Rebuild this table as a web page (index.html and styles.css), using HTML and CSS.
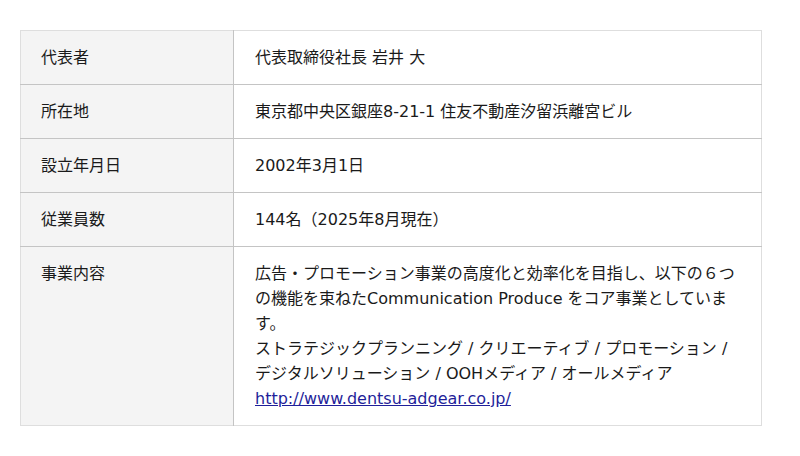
FILE: index.html
```html
<!DOCTYPE html>
<html lang="ja">
<head>
<meta charset="utf-8">
<link rel="stylesheet" href="styles.css">
</head>
<body>
<div class="wrap">
<table class="info">
<tr><th>代表者</th><td>代表取締役社長 岩井 大</td></tr>
<tr><th>所在地</th><td>東京都中央区銀座8-21-1 住友不動産汐留浜離宮ビル</td></tr>
<tr><th>設立年月日</th><td>2002年3月1日</td></tr>
<tr><th>従業員数</th><td>144名（2025年8月現在）</td></tr>
<tr><th>事業内容</th><td>広告・プロモーション事業の高度化と効率化を目指し、以下の６つの機能を束ねたCommunication Produce をコア事業としています。<br>ストラテジックプランニング / クリエーティブ / プロモーション / デジタルソリューション / OOHメディア / オールメディア<br><a href="#">http://www.dentsu-adgear.co.jp/</a></td></tr>
</table>
</div>
</body>
</html>
```
FILE: styles.css
```css
html, body { margin: 0; padding: 0; background: #fff; }
body { font-family: "DejaVu Sans", "Noto Sans CJK JP", sans-serif; font-size: 16px; color: #1a1a1a; }
.wrap { padding: 30px 38px 30px 20px; }
.info { width: 742px; border-collapse: collapse; border: 1px solid #dedede; }
.info th, .info td { padding: 14px 21px; line-height: 25px; vertical-align: top; text-align: left; font-weight: normal; border-top: 1px solid #c4c4c4; }
.info tr:first-child th, .info tr:first-child td { border-top: 1px solid #dedede; }
.info th { width: 171px; background: #f4f4f4; border-right: 1px solid #c4c4c4; padding-left: 20px; }
.info a { color: #1f1f9a; }
```
